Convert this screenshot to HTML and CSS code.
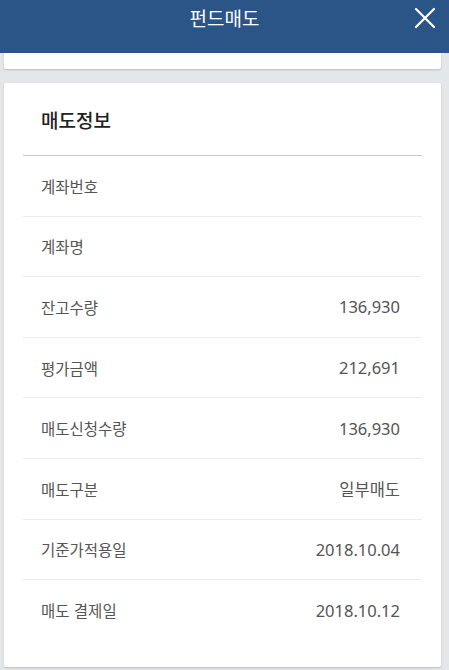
FILE: index.html
```html
<!DOCTYPE html>
<html lang="ko">
<head>
<meta charset="utf-8">
<link rel="stylesheet" href="styles.css">
</head>
<body>
<header class="topbar">
  <h1 class="topbar-title">펀드매도</h1>
  <button class="close-btn" aria-label="닫기">
    <svg width="22" height="22" viewBox="0 0 22 22"><path d="M2 2 L20 20 M20 2 L2 20" stroke="#fff" stroke-width="2.2" stroke-linecap="round" fill="none"/></svg>
  </button>
</header>
<div class="card card-top"></div>
<section class="card card-main">
  <h2 class="section-title">매도정보</h2>
  <ul class="info-list">
    <li class="info-row"><span class="label">계좌번호</span><span class="value"></span></li>
    <li class="info-row"><span class="label">계좌명</span><span class="value"></span></li>
    <li class="info-row"><span class="label">잔고수량</span><span class="value">136,930</span></li>
    <li class="info-row"><span class="label">평가금액</span><span class="value">212,691</span></li>
    <li class="info-row"><span class="label">매도신청수량</span><span class="value">136,930</span></li>
    <li class="info-row"><span class="label">매도구분</span><span class="value">일부매도</span></li>
    <li class="info-row"><span class="label">기준가적용일</span><span class="value">2018.10.04</span></li>
    <li class="info-row"><span class="label">매도 결제일</span><span class="value">2018.10.12</span></li>
  </ul>
</section>
</body>
</html>
```
FILE: styles.css
```css
* { box-sizing: border-box; }
html, body { margin: 0; padding: 0; }
body {
  background: #e4e7ea;
  font-family: "Noto Sans CJK KR", "Noto Sans", sans-serif;
  width: 449px;
  height: 670px;
  overflow: hidden;
}
.topbar {
  height: 53px;
  background: #2b5587;
  display: flex;
  align-items: flex-start;
  justify-content: center;
  position: relative;
}
.topbar-title {
  margin: 0;
  padding-top: 4px;
  color: #fff;
  font-size: 19px;
  font-weight: 400;
  line-height: 28px;
}
.close-btn {
  position: absolute;
  right: 13px;
  top: 7px;
  border: 0;
  background: none;
  padding: 0;
  width: 22px;
  height: 22px;
}
.card {
  background: #fff;
  margin: 0 8px 0 4px;
  box-shadow: 0 1px 2px rgba(0,0,0,0.18);
  border-radius: 2px;
}
.card-top {
  height: 16px;
  border-radius: 0 0 2px 2px;
}
.card-main {
  margin-top: 14px;
  padding: 0 19px 27px;
}
.section-title {
  margin: 0;
  height: 73px;
  display: flex;
  align-items: center;
  padding-left: 18px;
  padding-top: 1px;
  font-size: 19px;
  font-weight: 500;
  color: #222;
  border-bottom: 1px solid #c9c9c9;
}
.info-list {
  list-style: none;
  margin: 0;
  padding: 0;
}
.info-row {
  height: 60.6px;
  display: flex;
  align-items: center;
  justify-content: space-between;
  padding: 0 22px 0 18px;
  border-bottom: 1px solid #ededed;
  font-size: 15.5px;
  color: #555;
}
.info-row:last-child {
  border-bottom: 0;
  height: 60px;
}
.value {
  color: #555;
  font-family: "Noto Sans", "Noto Sans CJK KR", sans-serif;
  font-size: 16.5px;
}
```
